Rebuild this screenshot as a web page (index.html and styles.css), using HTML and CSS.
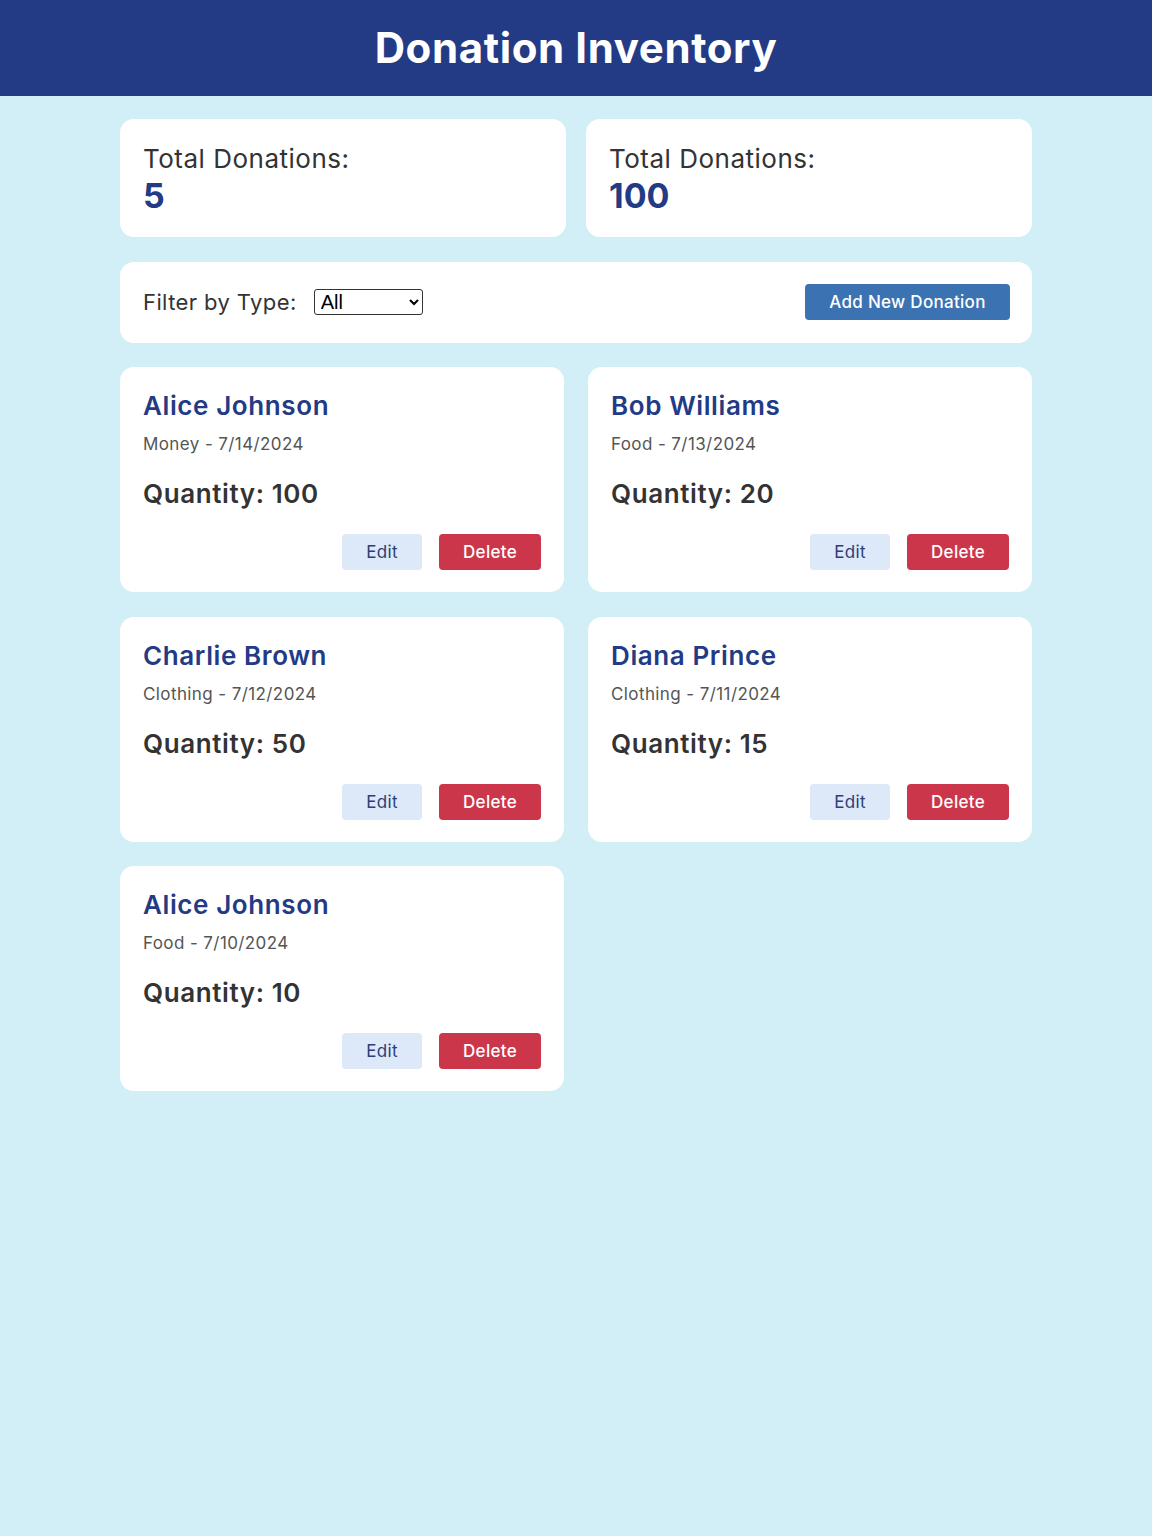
FILE: index.html
```html
<!DOCTYPE html>
<html>
<head>
<meta charset="utf-8">
<link rel="stylesheet" href="styles.css">
</head>
<body>
<header class="topbar"><h1>Donation Inventory</h1></header>
<main class="container">
  <section class="stats">
    <div class="stat-card"><div class="stat-label">Total Donations:</div><div class="stat-value">5</div></div>
    <div class="stat-card"><div class="stat-label">Total Donations:</div><div class="stat-value">100</div></div>
  </section>
  <section class="filter-bar">
    <label class="filter-label">Filter by Type:
      <select class="filter-select"><option>All</option><option>Money</option><option>Food</option><option>Clothing</option></select>
    </label>
    <button class="btn-add">Add New Donation</button>
  </section>
  <section class="grid">
    <div class="card">
      <h2 class="donor">Alice Johnson</h2>
      <p class="meta">Money - 7/14/2024</p>
      <p class="qty">Quantity: 100</p>
      <div class="actions"><button class="btn-edit">Edit</button><button class="btn-del">Delete</button></div>
    </div>
    <div class="card">
      <h2 class="donor">Bob Williams</h2>
      <p class="meta">Food - 7/13/2024</p>
      <p class="qty">Quantity: 20</p>
      <div class="actions"><button class="btn-edit">Edit</button><button class="btn-del">Delete</button></div>
    </div>
    <div class="card">
      <h2 class="donor">Charlie Brown</h2>
      <p class="meta">Clothing - 7/12/2024</p>
      <p class="qty">Quantity: 50</p>
      <div class="actions"><button class="btn-edit">Edit</button><button class="btn-del">Delete</button></div>
    </div>
    <div class="card">
      <h2 class="donor">Diana Prince</h2>
      <p class="meta">Clothing - 7/11/2024</p>
      <p class="qty">Quantity: 15</p>
      <div class="actions"><button class="btn-edit">Edit</button><button class="btn-del">Delete</button></div>
    </div>
    <div class="card">
      <h2 class="donor">Alice Johnson</h2>
      <p class="meta">Food - 7/10/2024</p>
      <p class="qty">Quantity: 10</p>
      <div class="actions"><button class="btn-edit">Edit</button><button class="btn-del">Delete</button></div>
    </div>
  </section>
</main>
</body>
</html>
```

FILE: styles.css
```css
* { box-sizing: border-box; }
html, body { margin: 0; padding: 0; }
body {
  background: #d2eef7;
  font-family: "Inter", "Noto Sans", sans-serif;
  color: #333;
  min-height: 1536px;
}
.topbar {
  background: #233a85;
  height: 96px;
  display: flex;
  align-items: center;
  justify-content: center;
  padding-bottom: 2px;
}
.topbar h1 {
  margin: 0;
  color: #fff;
  font-size: 42px;
  font-weight: 700;
  letter-spacing: 0.6px;
}
.container {
  width: 912px;
  margin: 23px auto 0;
}
.stats {
  display: grid;
  grid-template-columns: 1fr 1fr;
  gap: 20px;
}
.stat-card {
  background: #fff;
  border-radius: 14px;
  height: 118px;
  padding: 23px 23px;
}
.stat-label {
  font-size: 26px;
  line-height: 34px;
  letter-spacing: 0.5px;
  color: #333;
}
.stat-value {
  font-size: 34px;
  font-weight: 700;
  line-height: 40px;
  color: #233a85;
}
.filter-bar {
  margin-top: 25px;
  background: #fff;
  border-radius: 14px;
  height: 81px;
  padding: 0 22px 2px 23px;
  display: flex;
  align-items: center;
  justify-content: space-between;
}
.filter-label {
  font-size: 22px;
  letter-spacing: 0.4px;
  color: #333;
  display: flex;
  align-items: center;
  gap: 17px;
}
.filter-select {
  width: 109px;
  height: 26px;
  font-family: "Liberation Sans", sans-serif;
  font-size: 20px;
  letter-spacing: 0;
  padding: 0 2px;
  border: 1px solid #333;
  border-radius: 3px;
  background: #fff;
  color: #000;
}
.btn-add {
  width: 205px;
  height: 36px;
  border: none;
  border-radius: 4px;
  background: #3b72b2;
  color: #fff;
  font-family: inherit;
  font-size: 17px;
  font-weight: 500;
  letter-spacing: 0.3px;
}
.grid {
  margin-top: 24px;
  display: grid;
  grid-template-columns: 1fr 1fr;
  column-gap: 24px;
  row-gap: 24.5px;
}
.card {
  background: #fff;
  border-radius: 14px;
  height: 225px;
  padding: 23px 23px 22px 23px;
  display: flex;
  flex-direction: column;
}
.donor {
  margin: 0;
  font-size: 26px;
  font-weight: 600;
  line-height: 32px;
  letter-spacing: 0.6px;
  color: #233a85;
}
.meta {
  margin: 10px 0 0;
  font-size: 17px;
  line-height: 24px;
  letter-spacing: 0.4px;
  color: #555;
}
.qty {
  margin: 21px 0 0;
  font-size: 26px;
  font-weight: 600;
  line-height: 34px;
  letter-spacing: 0.6px;
  color: #333;
}
.actions {
  margin-top: auto;
  display: flex;
  justify-content: flex-end;
  gap: 17px;
}
.btn-edit, .btn-del {
  height: 36px;
  border: none;
  border-radius: 4px;
  font-family: inherit;
  font-size: 17px;
  letter-spacing: 0.3px;
}
.btn-edit {
  width: 80px;
  background: #dde8f9;
  color: #2c3e75;
}
.btn-del {
  width: 102px;
  background: #cc364b;
  color: #fff;
  font-weight: 500;
}
```
